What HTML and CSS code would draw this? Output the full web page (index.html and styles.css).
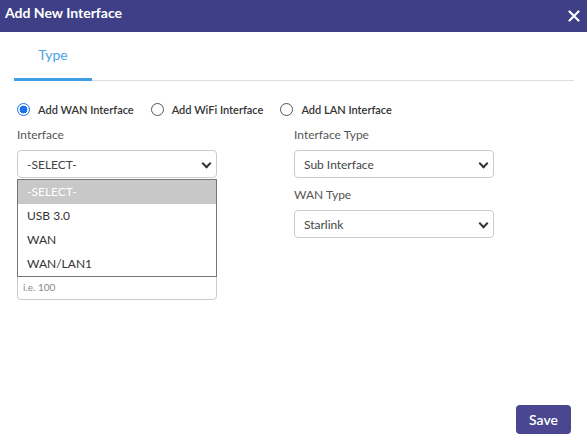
FILE: index.html
```html
<!DOCTYPE html>
<html lang="en">
<head>
    <meta charset="UTF-8">
    <title>Add New Interface</title>
    <link rel="stylesheet" href="styles.css">
</head>
<body>
    <div class="modal">
        <div class="modal-header">
            <span class="modal-title">Add New Interface</span>
            <span class="close">
                <svg width="12" height="12" viewBox="0 0 12 12"><path d="M1.5 1.5 L10.5 10.5 M10.5 1.5 L1.5 10.5" stroke="#fff" stroke-width="2.2" stroke-linecap="round"/></svg>
            </span>
        </div>

        <div class="tabs">
            <div class="tab active">Type</div>
        </div>

        <div class="radio-row">
            <label class="radio checked"><span class="dot"></span>Add WAN Interface</label>
            <label class="radio"><span class="dot"></span>Add WiFi Interface</label>
            <label class="radio"><span class="dot"></span>Add LAN Interface</label>
        </div>

        <div class="form-grid">
            <div class="col">
                <div class="field">
                    <div class="field-label">Interface</div>
                    <div class="select-wrap">
                        <div class="select">-SELECT-<span class="chev"></span></div>
                        <ul class="dropdown">
                            <li class="selected">-SELECT-</li>
                            <li>USB 3.0</li>
                            <li>WAN</li>
                            <li>WAN/LAN1</li>
                        </ul>
                    </div>
                </div>
                <!-- fields under the open list are covered -->
                <div class="field covered">
                    <div class="input">i.e. 100</div>
                </div>
            </div>
            <div class="col">
                <div class="field">
                    <div class="field-label">Interface Type</div>
                    <div class="select">Sub Interface<span class="chev"></span></div>
                </div>
                <div class="field">
                    <div class="field-label">WAN Type</div>
                    <div class="select">Starlink<span class="chev"></span></div>
                </div>
            </div>
        </div>

        <div class="footer">
            <button class="btn-save">Save</button>
        </div>
    </div>
</body>
</html>
```

FILE: styles.css
```css
body {
    margin: 0;
    width: 587px;
    height: 438px;
    overflow: hidden;
    font-family: Lato, 'Open Sans', sans-serif;
    background: #fff;
    color: #333;
}

.modal {
    display: flex;
    flex-direction: column;
    height: 438px;
}

.modal-header {
    height: 32px;
    background: #3e3f87;
    display: flex;
    align-items: center;
    justify-content: space-between;
    padding: 0 5px 0 5px;
    color: white;
}

.modal-title {
    font-size: 14px;
    font-weight: 700;
    margin-top: -8px;
}

.close {
    display: flex;
    margin-right: 2px;
    margin-top: -1px;
}

.tabs {
    margin: 0 13px 0 14px;
    border-bottom: 1px solid #dedede;
    display: flex;
}

.tab {
    width: 78px;
    text-align: center;
    padding: 14px 0 15px;
    font-size: 14px;
    color: #4aa3e6;
    border-bottom: 3px solid #3f9fe3;
    margin-bottom: -1px;
}

.radio-row {
    display: flex;
    align-items: center;
    padding: 22px 0 0 17px;
    font-size: 11px;
    font-weight: 600;
    color: #333;
}

.radio {
    display: flex;
    align-items: center;
    margin-right: 17px;
}

.radio .dot {
    width: 11px;
    height: 11px;
    border: 1px solid #555;
    border-radius: 50%;
    margin-right: 8px;
    box-sizing: content-box;
}

.radio.checked .dot {
    border-color: #1a73e8;
    background: radial-gradient(circle, #1a73e8 0 3.6px, #fff 4.2px);
}

.form-grid {
    display: grid;
    grid-template-columns: 200px 200px;
    column-gap: 77px;
    padding: 11px 0 0 17px;
}

.field {
    margin-bottom: 9px;
}

.field.covered {
    margin-top: 94px;
}

.field-label {
    font-size: 12px;
    color: #555;
    margin-bottom: 8px;
    line-height: 15px;
}

.select-wrap {
    position: relative;
}

.select {
    height: 28px;
    box-sizing: border-box;
    border: 1px solid #ccc;
    border-radius: 4px;
    display: flex;
    align-items: center;
    padding-left: 9px;
    font-size: 12px;
    color: #444;
    position: relative;
}

.chev {
    position: absolute;
    right: 6px;
    top: 9px;
    width: 5px;
    height: 5px;
    border-right: 2px solid #333;
    border-bottom: 2px solid #333;
    transform: rotate(45deg);
}

.input {
    height: 28px;
    box-sizing: border-box;
    border: 1px solid #ccc;
    border-radius: 4px;
    display: flex;
    align-items: flex-end;
    padding: 0 0 6px 5px;
    font-size: 10px;
    color: #888;
}

.dropdown {
    position: absolute;
    top: 29px;
    left: 0;
    width: 200px;
    box-sizing: border-box;
    margin: 0;
    padding: 0;
    list-style: none;
    background: #fff;
    border: 1px solid #767676;
    z-index: 2;
}

.dropdown li {
    height: 24px;
    line-height: 24px;
    padding-left: 9px;
    font-size: 12px;
    color: #333;
}

.dropdown li.selected {
    background: #c8c8c8;
    color: #fff;
}

.footer {
    margin-top: auto;
    display: flex;
    justify-content: flex-end;
    padding: 0 16px 4px 0;
}

.btn-save {
    width: 55px;
    height: 29px;
    border: none;
    border-radius: 4px;
    background: #4a4790;
    color: white;
    font-family: Lato, sans-serif;
    font-size: 14px;
    font-weight: 600;
}
```
